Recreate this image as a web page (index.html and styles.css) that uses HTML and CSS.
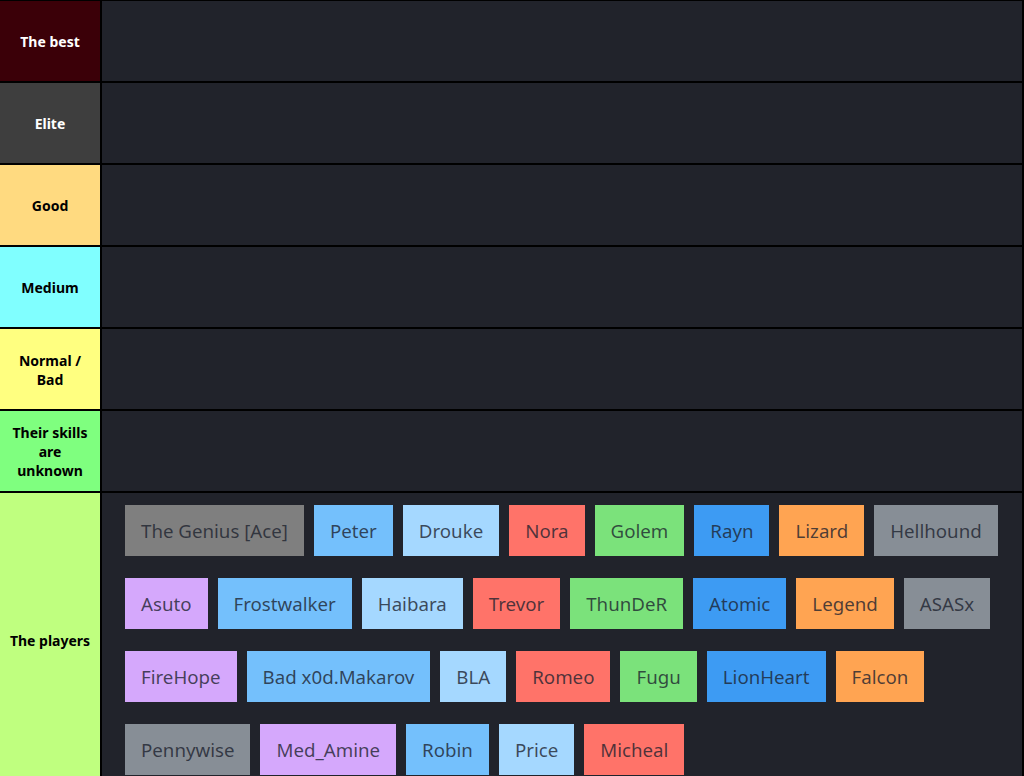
FILE: index.html
```html
<!DOCTYPE html>
<html lang="en">
<head>
    <meta charset="UTF-8">
    <meta name="viewport" content="width=device-width, initial-scale=1.0">
    <title>Tier List</title>
    <link rel="stylesheet" href="styles.css">
</head>
<body>
    <div class="tier-list">
        <div class="tier">
            <div class="label best">The best</div>
            <div class="items"></div>
        </div>
        <div class="tier">
            <div class="label elite">Elite</div>
            <div class="items"></div>
        </div>
        <div class="tier">
            <div class="label good">Good</div>
            <div class="items"></div>
        </div>
        <div class="tier">
            <div class="label medium">Medium</div>
            <div class="items"></div>
        </div>
        <div class="tier">
            <div class="label normal">Normal / Bad</div>
            <div class="items"></div>
        </div>
        <div class="tier">
            <div class="label unknown">Their skills are unknown</div>
            <div class="items"></div>
        </div>
        <div class="tier">
            <div class="label players">The players</div>
            <div class="items pool">
                <span class="item grey">The Genius [Ace]</span>
                <span class="item sky">Peter</span>
                <span class="item pale">Drouke</span>
                <span class="item red">Nora</span>
                <span class="item green">Golem</span>
                <span class="item blue">Rayn</span>
                <span class="item orange">Lizard</span>
                <span class="item slate">Hellhound</span>

                <span class="item purple">Asuto</span>
                <span class="item sky">Frostwalker</span>
                <span class="item pale">Haibara</span>
                <span class="item red">Trevor</span>
                <span class="item green">ThunDeR</span>
                <span class="item blue">Atomic</span>
                <span class="item orange">Legend</span>
                <span class="item slate">ASASx</span>

                <span class="item purple">FireHope</span>
                <span class="item sky">Bad x0d.Makarov</span>
                <span class="item pale">BLA</span>
                <span class="item red">Romeo</span>
                <span class="item green">Fugu</span>
                <span class="item blue">LionHeart</span>
                <span class="item orange">Falcon</span>

                <span class="item slate">Pennywise</span>
                <span class="item purple">Med_Amine</span>
                <span class="item sky">Robin</span>
                <span class="item pale">Price</span>
                <span class="item red">Micheal</span>
            </div>
        </div>
    </div>
</body>
</html>
```

FILE: styles.css
```css
body {
    margin: 0;
    padding: 0;
    background-color: #000;
    font-family: "Noto Sans", "Open Sans", sans-serif;
}
.tier-list {
    border-top: 1px solid #000;
    border-right: 2px solid #000;
}
.tier {
    display: flex;
    min-height: 80px;
    border-bottom: 2px solid #000;
}
.label {
    width: 102px;
    flex-shrink: 0;
    border-right: 2px solid #000;
    display: flex;
    align-items: center;
    justify-content: center;
    text-align: center;
    padding: 1px 8px 0;
    box-sizing: border-box;
    font-size: 14px;
    font-weight: bold;
    line-height: 19px;
    color: #000;
}
.best { background-color: #3b0008; color: #fff; }
.elite { background-color: #3e3e3e; color: #fff; }
.good { background-color: #ffda80; }
.medium { background-color: #80ffff; }
.normal { background-color: #ffff80; }
.unknown { background-color: #7fff7f; }
.players { background-color: #bfff7f; }

.items {
    flex: 1;
    background-color: #21232b;
    display: flex;
    flex-wrap: wrap;
    align-content: flex-start;
    padding: 1px 8px 0 18px;
}
.item {
    margin: 11px 5px;
    height: 51px;
    padding: 0 16px;
    display: flex;
    align-items: center;
    font-size: 18.7px;
    color: rgba(28, 34, 46, 0.78);
}
.grey { background-color: #7f7f7f; }
.sky { background-color: #74c0fc; }
.pale { background-color: #a5d8ff; }
.red { background-color: #ff7369; }
.green { background-color: #7be27b; }
.blue { background-color: #3d9bf3; }
.orange { background-color: #ffa452; }
.slate { background-color: #878e96; }
.purple { background-color: #d5a8fc; }
```
